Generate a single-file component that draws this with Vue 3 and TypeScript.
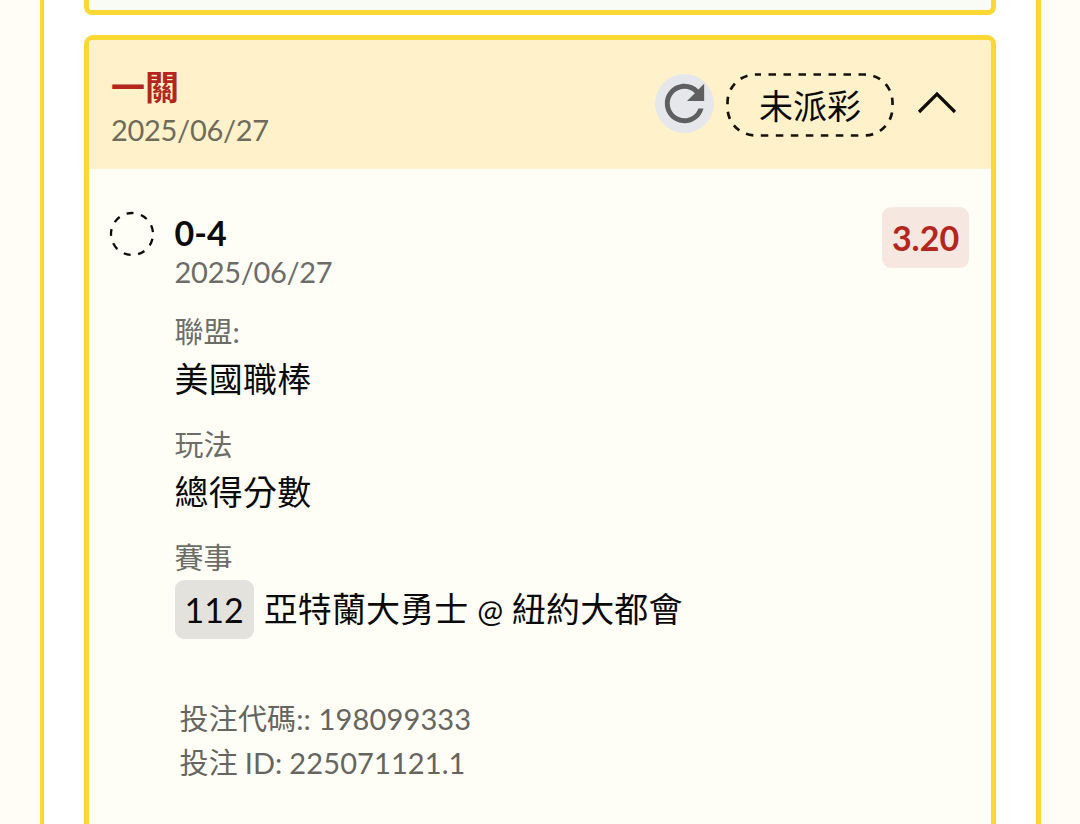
<script setup lang="ts">
import { ref } from "vue";

interface Field {
  label: string;
  value: string;
}

const open = ref(true);

const bet = {
  title: "一關",
  date: "2025/06/27",
  status: "未派彩",
  pick: "0-4",
  odds: "3.20",
  gameNo: "112",
  away: "亞特蘭大勇士",
  home: "紐約大都會",
  code: "198099333",
  id: "225071121.1",
};

const fields: Field[] = [
  { label: "聯盟:", value: "美國職棒" },
  { label: "玩法", value: "總得分數" },
];
</script>

<template>
  <div class="page">
    <main class="panel">
      <section class="card previous"></section>
      <section class="card current">
        <header class="header">
          <div class="heading">
            <h2 class="title">{{ bet.title }}</h2>
            <p class="date">{{ bet.date }}</p>
          </div>
          <button class="refresh" aria-label="refresh">
            <svg viewBox="0 0 24 24">
              <path
                d="M17.65 6.35C16.2 4.9 14.21 4 12 4c-4.42 0-7.99 3.58-7.99 8s3.57 8 7.99 8c3.73 0 6.84-2.55 7.73-6h-2.08c-.82 2.33-3.04 4-5.65 4-3.31 0-6-2.69-6-6s2.69-6 6-6c1.66 0 3.14.69 4.22 1.78L13 11h7V4l-2.35 2.35z"
              />
            </svg>
          </button>
          <div class="status">
            <svg class="status-outline" viewBox="0 0 168 64">
              <rect x="1.5" y="1.5" width="165" height="61" rx="28" />
            </svg>
            <span class="status-text">{{ bet.status }}</span>
          </div>
          <button class="toggle" aria-label="toggle" @click="open = !open">
            <svg viewBox="0 0 40 24">
              <path d="M2 21 20 3l18 18" />
            </svg>
          </button>
        </header>

        <div v-if="open" class="body">
          <svg class="pending" viewBox="0 0 46 46">
            <circle cx="23" cy="23" r="21" />
          </svg>
          <div class="details">
            <h3 class="pick">{{ bet.pick }}</h3>
            <p class="date pick-date">{{ bet.date }}</p>

            <div v-for="field in fields" :key="field.label" class="field">
              <p class="label">{{ field.label }}</p>
              <p class="value">{{ field.value }}</p>
            </div>

            <div class="field">
              <p class="label">賽事</p>
              <div class="match">
                <span class="game-no">{{ bet.gameNo }}</span>
                <span class="teams">{{ bet.away }} <span class="at">@</span> {{ bet.home }}</span>
              </div>
            </div>

            <div class="meta">
              <p class="code">投注代碼:: {{ bet.code }}</p>
              <p class="id">投注 ID: {{ bet.id }}</p>
            </div>
          </div>
          <span class="odds">{{ bet.odds }}</span>
        </div>
      </section>
    </main>
  </div>
</template>

<style>
body {
  margin: 0;
  background: #fffdf6;
}
</style>

<style scoped>
.page {
  box-sizing: border-box;
  width: 1080px;
  height: 824px;
  padding: 0 39px 0 40px;
  overflow: hidden;
  background: #fffdf6;
  font-family: Lato, "Noto Sans CJK TC", sans-serif;
  color: #0a0a0a;
}

h2,
h3,
p {
  margin: 0;
}

button {
  padding: 0;
  border: 0;
  background: none;
}

.panel {
  box-sizing: border-box;
  display: flex;
  flex-direction: column;
  gap: 20px;
  height: 824px;
  padding: 0 40px;
  border: solid #fdd835;
  border-width: 0 5px 0 4px;
  background: #fff;
}

.card {
  box-sizing: border-box;
  border: 5px solid #fdd835;
  background: #fffef6;
}

.previous {
  flex: none;
  height: 15px;
  border-top: 0;
  border-radius: 0 0 8px 8px;
  background: #f9fcf5;
}

.current {
  flex: 1;
  border-bottom: 0;
  border-radius: 9px 9px 0 0;
  overflow: hidden;
}

.header {
  box-sizing: border-box;
  display: flex;
  height: 129px;
  padding: 0 34px 0 22px;
  background: #fff2ca;
}

.heading {
  flex: 1;
  padding-top: 25px;
}

.title {
  font-size: 34px;
  line-height: 44px;
  font-weight: 700;
  color: #b3261e;
}

.date {
  font-size: 29px;
  line-height: 42px;
  letter-spacing: -0.3px;
  color: #6f6b5b;
}

.refresh {
  display: flex;
  width: 59px;
  height: 59px;
  margin: 34px 12px 0 0;
  border-radius: 50%;
  background: #e5e7ea;
}

.refresh svg {
  width: 59px;
  height: 59px;
  fill: #5f5f5f;
}

.status {
  position: relative;
  width: 168px;
  height: 64px;
  margin: 33px 23px 0 0;
  text-align: center;
}

.status-outline {
  position: absolute;
  inset: 0;
  width: 168px;
  height: 64px;
  fill: none;
  stroke: #16120a;
  stroke-width: 2.7;
  stroke-dasharray: 7.5 7.5;
  stroke-dashoffset: 2;
}

.status-text {
  font-size: 34px;
  line-height: 66px;
}

.toggle {
  width: 40px;
  height: 24px;
  margin-top: 51px;
}

.toggle svg {
  display: block;
  fill: none;
  stroke: #0f0c06;
  stroke-width: 3.2;
}

.body {
  display: flex;
  align-items: flex-start;
  padding: 38px 22px 0 20px;
}

.pending {
  flex: none;
  width: 46px;
  height: 46px;
  margin: 4px 19.6px 0 0;
  fill: none;
  stroke: #0a0a0a;
  stroke-width: 2.3;
  stroke-dasharray: 7 7.66;
  stroke-dashoffset: -4.9;
}

.details {
  flex: 1;
}

.pick {
  padding-top: 4px;
  font-size: 34px;
  line-height: 44px;
  font-weight: 700;
}

.pick-date {
  line-height: 34px;
  color: #6c6c68;
}

.field {
  padding-top: 17px;
}

.field:first-of-type {
  padding-top: 21px;
}

.label {
  font-size: 29px;
  line-height: 44px;
  color: #6c6c68;
}

.value {
  padding-bottom: 2px;
  font-size: 34px;
  line-height: 50px;
  letter-spacing: 0.2px;
}

.match {
  display: flex;
  align-items: center;
  gap: 10px;
  font-size: 34px;
  line-height: 59px;
  margin-top: -1px;
}

.game-no {
  padding: 0 10px;
  border-radius: 9px;
  background: #e4e2dc;
}

.teams {
  letter-spacing: 0.1px;
}

.at {
  font-size: 31px;
}

.meta {
  padding: 57px 0 0 5px;
  font-size: 29px;
  line-height: 44px;
  color: #66655f;
}

.code {
  letter-spacing: 0.15px;
}

.id {
  letter-spacing: 0.1px;
  word-spacing: -0.6px;
}

.odds {
  box-sizing: border-box;
  width: 87px;
  border-radius: 9px;
  background: #f7e7e1;
  font-size: 34px;
  line-height: 61px;
  font-weight: 700;
  text-align: center;
  color: #b3261e;
}
</style>
